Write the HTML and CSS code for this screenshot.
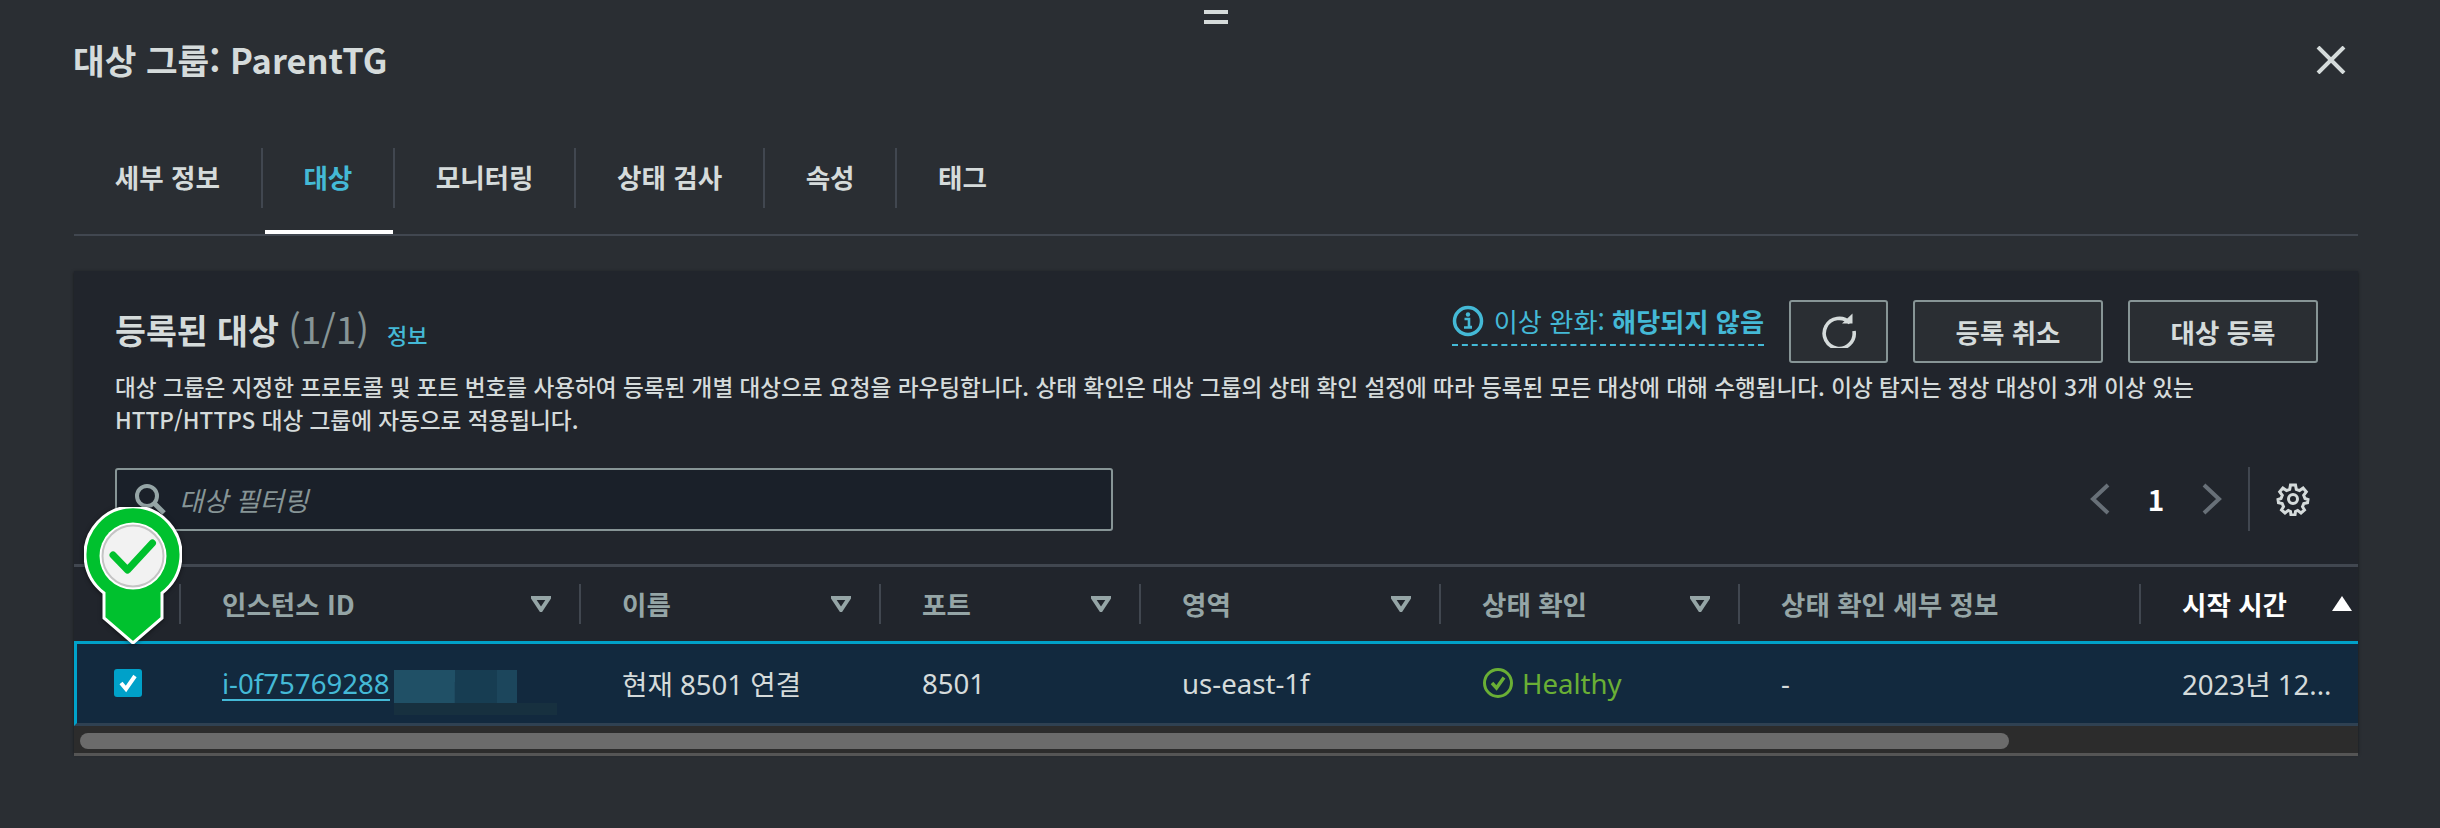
FILE: index.html
```html
<!DOCTYPE html>
<html lang="ko">

<head>
    <meta charset="UTF-8">
    <meta name="viewport" content="width=device-width, initial-scale=1.0">
    <title>대상 그룹</title>
    <link rel="stylesheet" href="styles.css">
</head>

<body>
    <div class="handle"><span></span><span></span></div>

    <div class="title-row">
        <h1>대상 그룹: ParentTG</h1>
        <svg class="close" width="30" height="28" viewBox="0 0 30 28"><path d="M2 1L28 27M28 1L2 27" /></svg>
    </div>

    <ul class="tabs">
        <li>세부 정보</li>
        <li class="active">대상</li>
        <li>모니터링</li>
        <li>상태 검사</li>
        <li>속성</li>
        <li>태그</li>
    </ul>

    <div class="panel">
        <div class="panel-top">
            <div class="heading">
                <h2>등록된 대상 <span class="count">(1/1)</span></h2>
                <a class="info-link">정보</a>
            </div>
            <div class="actions">
                <div class="anomaly">
                    <svg width="32" height="32" viewBox="0 0 32 32">
                        <circle cx="16" cy="16" r="13.5" fill="none" stroke="#44b9d6" stroke-width="3.5" />
                        <circle cx="16" cy="9.5" r="2.2" fill="#44b9d6" />
                        <path d="M12.5 14H17V22H20M12 22.500H20" fill="none" stroke="#44b9d6" stroke-width="2.600" />
                    </svg>
                    <span>이상 완화: <b>해당되지 않음</b></span>
                </div>
                <button class="btn-icon">
                    <svg width="36" height="36" viewBox="0 0 36 36">
                        <path d="M29 11A15 15 0 1 0 33 19" fill="none" stroke="#d5dbdb" stroke-width="3.600" />
                        <path d="M21 11.500H31.500V1.500Z" fill="#d5dbdb" />
                    </svg>
                </button>
                <button>등록 취소</button>
                <button>대상 등록</button>
            </div>
        </div>

        <p class="desc">대상 그룹은 지정한 프로토콜 및 포트 번호를 사용하여 등록된 개별 대상으로 요청을 라우팅합니다. 상태 확인은 대상 그룹의 상태 확인 설정에 따라 등록된 모든 대상에 대해 수행됩니다. 이상 탐지는 정상 대상이 3개 이상 있는<br>HTTP/HTTPS 대상 그룹에 자동으로 적용됩니다.</p>

        <div class="tools">
            <div class="search">
                <svg width="32" height="32" viewBox="0 0 32 32">
                    <circle cx="13" cy="13" r="10" fill="none" stroke="#95a5a6" stroke-width="4" />
                    <path d="M20 20L30 30" stroke="#95a5a6" stroke-width="5" />
                </svg>
                <span>대상 필터링</span>
            </div>
            <div class="pager">
                <svg width="20" height="32" viewBox="0 0 20 32"><path d="M18 2L3 16L18 30" /></svg>
                <span class="page-num">1</span>
                <svg width="20" height="32" viewBox="0 0 20 32"><path d="M2 2L17 16L2 30" /></svg>
                <i class="pager-line"></i>
                <svg class="gear" width="34" height="34" viewBox="0 0 34 34">
                    <circle cx="17" cy="17" r="4.500" />
                    <path d="M14.500 3H19.500L20.300 7.300L23.500 8.600L27.100 6.100L30.300 9.900L27.700 13.300L29 16.500L32 17.500L31.500 20.800L27.800 21.500L26.500 24.700L28.500 28L25 31L21.700 28.400L19.500 29.500L19 33H15L14.500 29.500L12.300 28.400L9 31L5.500 28L7.500 24.700L6.200 21.500L2.500 20.800L2 17.500L5 16.500L6.300 13.300L3.700 9.900L6.900 6.100L10.500 8.600L13.700 7.300Z" />
                </svg>
            </div>
        </div>

        <div class="table">
            <div class="row head">
                <div class="cell"></div>
                <div class="cell"><span>인스턴스 ID</span><svg class="sort" width="20" height="16" viewBox="0 0 20 16"><path d="M2 2H18L10 14Z" /></svg></div>
                <div class="cell"><span>이름</span><svg class="sort" width="20" height="16" viewBox="0 0 20 16"><path d="M2 2H18L10 14Z" /></svg></div>
                <div class="cell"><span>포트</span><svg class="sort" width="20" height="16" viewBox="0 0 20 16"><path d="M2 2H18L10 14Z" /></svg></div>
                <div class="cell"><span>영역</span><svg class="sort" width="20" height="16" viewBox="0 0 20 16"><path d="M2 2H18L10 14Z" /></svg></div>
                <div class="cell"><span>상태 확인</span><svg class="sort" width="20" height="16" viewBox="0 0 20 16"><path d="M2 2H18L10 14Z" /></svg></div>
                <div class="cell"><span>상태 확인 세부 정보</span></div>
                <div class="cell sorted"><span>시작 시간</span><i class="sort-up"></i></div>
            </div>
            <div class="row selected">
                <div class="cell"><i class="check"><svg width="20" height="20" viewBox="0 0 20 20"><path d="M3 10L8 16L17 3" /></svg></i></div>
                <div class="cell"><a class="instance">i-0f75769288</a></div>
                <div class="cell">현재 8501 연결</div>
                <div class="cell">8501</div>
                <div class="cell">us-east-1f</div>
                <div class="cell healthy">
                    <svg width="32" height="32" viewBox="0 0 32 32">
                        <circle cx="16" cy="16" r="13.500" fill="none" stroke="#6aaf35" stroke-width="3" />
                        <path d="M10 16L14.500 21L22 10.500" fill="none" stroke="#6aaf35" stroke-width="3.500" />
                    </svg>
                    Healthy
                </div>
                <div class="cell">-</div>
                <div class="cell">2023년 12...</div>
            </div>
            <div class="scroll"><div class="thumb"></div></div>
        </div>

        <!-- 가려진 인스턴스 ID -->
        <div class="blur">
            <b class="b1"></b><b class="b2"></b><b class="b3"></b><b class="b4"></b><b class="b5"></b>
        </div>

        <svg class="pin" width="98" height="137" viewBox="0 0 98 137">
            <path d="M20 86A48 48 0 1 1 78 86V111L49 136L20 111Z" fill="#00c12e" stroke="#fff" stroke-width="3" />
            <circle cx="49" cy="49" r="33.500" fill="#fff" />
            <circle cx="49" cy="49" r="30.500" fill="#f2f2f2" stroke="#c4c4c4" stroke-width="2" />
            <path d="M29 48L43.500 63L68.500 36" fill="none" stroke="#00c12e" stroke-width="7" stroke-linecap="round" stroke-linejoin="round" />
        </svg>
    </div>
</body>

</html>
```

FILE: styles.css
```css
* {
    box-sizing: border-box;
}

html {
    height: 100%;
}

body {
    margin: 0;
    height: 100%;
    overflow: hidden;
    background-color: #2a2e33;
    color: #d5dbdb;
    font-family: "Noto Sans CJK KR", "Noto Sans", sans-serif;
    font-size: 26.5px;
}

h1,
h2,
p,
ul {
    margin: 0;
    padding: 0;
}

.handle {
    display: flex;
    flex-direction: column;
    align-items: center;
    gap: 6px;
    padding-top: 10px;
    margin-left: -8px;
}

.handle span {
    width: 24px;
    height: 4px;
    background-color: #d5dbdb;
}

.title-row {
    display: flex;
    justify-content: space-between;
    align-items: center;
    height: 72px;
    padding: 0 94px 0 73px;
}

h1 {
    font-size: 34.4px;
    font-weight: 700;
    margin-top: -3px;
}

.close path {
    fill: none;
    stroke: #d5dbdb;
    stroke-width: 4;
}

.tabs {
    display: flex;
    list-style: none;
    height: 88px;
    margin: 52px 82px 0 74px;
    border-bottom: 2px solid #414750;
    font-size: 26.6px;
    font-weight: 700;
}

.tabs li {
    position: relative;
    height: 60px;
    line-height: 58px;
    padding: 0 40.7px;
    border-right: 2px solid #414750;
}

.tabs li:last-child {
    border-right: none;
}

.tabs li.active {
    color: #44b9d6;
}

.tabs li.active::after {
    content: "";
    position: absolute;
    left: 2px;
    right: 0;
    bottom: -26px;
    height: 4px;
    background-color: #fff;
}

.panel {
    position: relative;
    height: 482px;
    margin: 35px 82px 0 74px;
    padding-top: 29px;
    background-color: #21252c;
    box-shadow: 0 1px 3px rgba(0, 0, 0, 0.5);
}

.panel-top {
    display: flex;
    justify-content: space-between;
    align-items: center;
    padding: 0 40px 0 41px;
    height: 63px;
}

.heading {
    display: flex;
    align-items: baseline;
    gap: 18px;
    margin-top: -8px;
}

h2 {
    font-size: 33.6px;
    font-weight: 700;
}

.count {
    color: #879596;
    font-size: 37px;
    font-weight: 400;
}

.info-link {
    color: #44b9d6;
    font-size: 22px;
    font-weight: 500;
}

.actions {
    display: flex;
    align-items: center;
    gap: 25px;
}

.anomaly {
    display: flex;
    align-items: center;
    gap: 10px;
    align-self: flex-start;
    height: 42px;
    margin-top: 4px;
    padding-bottom: 6px;
    border-bottom: 2px dashed #44b9d6;
    color: #44b9d6;
    font-size: 26.2px;
}

.anomaly b {
    font-weight: 700;
}

button {
    width: 190px;
    height: 63px;
    border: 2px solid #879596;
    border-radius: 3px;
    background-color: #2a2e33;
    color: #d5dbdb;
    font-family: inherit;
    font-size: 26.5px;
    font-weight: 700;
}

.btn-icon {
    width: 99px;
    padding: 4px 0 0;
}

.desc {
    margin-top: 7px;
    padding: 0 41px;
    font-size: 22.6px;
    font-weight: 500;
    line-height: 33px;
    white-space: nowrap;
}

.tools {
    display: flex;
    justify-content: space-between;
    align-items: center;
    margin-top: 31px;
    padding: 0 48px 0 41px;
}

.search {
    display: flex;
    align-items: center;
    gap: 13px;
    width: 998px;
    height: 63px;
    padding-left: 17px;
    border: 2px solid #879596;
    border-radius: 3px;
    background-color: #1a2029;
    color: #879596;
    font-style: italic;
}

.pager {
    display: flex;
    align-items: center;
}

.pager svg path {
    fill: none;
    stroke: #687078;
    stroke-width: 4;
}

.page-num {
    width: 92px;
    text-align: center;
    font-size: 28px;
    font-weight: 700;
    color: #fff;
}

.pager-line {
    width: 2px;
    height: 64px;
    margin: 0 26px;
    background-color: #414750;
}

.pager .gear path,
.pager .gear circle {
    fill: none;
    stroke: #d5dbdb;
    stroke-width: 3;
}

.table {
    margin-top: 33px;
    border-top: 3px solid #414750;
}

.row {
    display: grid;
    grid-template-columns: 107px 400px 300px 260px 300px 299px 401px 217px;
    align-items: center;
}

.head {
    height: 73px;
    font-weight: 700;
    color: #95a5a6;
}

.head .cell {
    display: flex;
    justify-content: space-between;
    align-items: center;
    height: 40px;
    padding: 0 28px 0 41px;
    border-right: 2px solid #414750;
}

.head .cell:last-child {
    border-right: none;
    padding-right: 6px;
}

.sort {
    fill: none;
    stroke: #95a5a6;
    stroke-width: 4;
    flex-shrink: 0;
}

.sorted {
    color: #fff;
}

.sort-up {
    width: 0;
    height: 0;
    border: 10px solid transparent;
    border-bottom: 15px solid #fff;
    border-top: none;
}

.selected {
    grid-template-columns: 104px 400px 300px 260px 300px 299px 401px 217px;
    height: 85px;
    margin-top: 1px;
    padding-bottom: 2px;
    background-color: #12293e;
    border: 3px solid #00a1c9;
    border-bottom: 3px solid #2f4152;
    border-right: none;
    font-family: "Noto Sans", "Noto Sans CJK KR", sans-serif;
    font-size: 27.6px;
}

.selected .cell {
    padding-left: 41px;
}

.selected .cell:first-child {
    padding-left: 37px;
    display: flex;
}

.selected .cell:last-child {
    padding-right: 0;
    white-space: nowrap;
}

.check {
    display: flex;
    align-items: center;
    justify-content: center;
    width: 28px;
    height: 28px;
    border-radius: 3px;
    background-color: #00a1c9;
}

.check path {
    fill: none;
    stroke: #fff;
    stroke-width: 4;
}

.instance {
    color: #44b9d6;
    border-bottom: 2px solid #44b9d6;
    display: inline-block;
    line-height: 32px;
}

.healthy {
    display: flex;
    align-items: center;
    gap: 8px;
    color: #6aaf35;
}

.scroll {
    height: 30px;
    padding: 7px 0 0 6px;
    background-color: #2c2c2c;
    border-bottom: 3px solid #555;
}

.thumb {
    width: 1929px;
    height: 16px;
    border-radius: 8px;
    background-color: #6b6b6b;
}

.blur {
    position: absolute;
    left: 320px;
    top: 399px;
    width: 163px;
    height: 45px;
}

.blur b {
    position: absolute;
    display: block;
}

.b1 {
    left: 0;
    top: 0;
    width: 82px;
    height: 33px;
    background-color: #205066;
}

.b2 {
    left: 60px;
    top: 12px;
    width: 22px;
    height: 21px;
    background-color: #1e4a60;
}

.b3 {
    left: 61px;
    top: 0;
    width: 42px;
    height: 33px;
    background-color: #173d52;
}

.b4 {
    left: 103px;
    top: 0;
    width: 20px;
    height: 33px;
    background-color: #1c465c;
}

.b5 {
    left: 0;
    top: 33px;
    width: 163px;
    height: 12px;
    background-color: #17303f;
}

.pin {
    position: absolute;
    left: 10px;
    top: 236px;
    filter: drop-shadow(0 1px 2px rgba(0, 0, 0, 0.5));
}
```
